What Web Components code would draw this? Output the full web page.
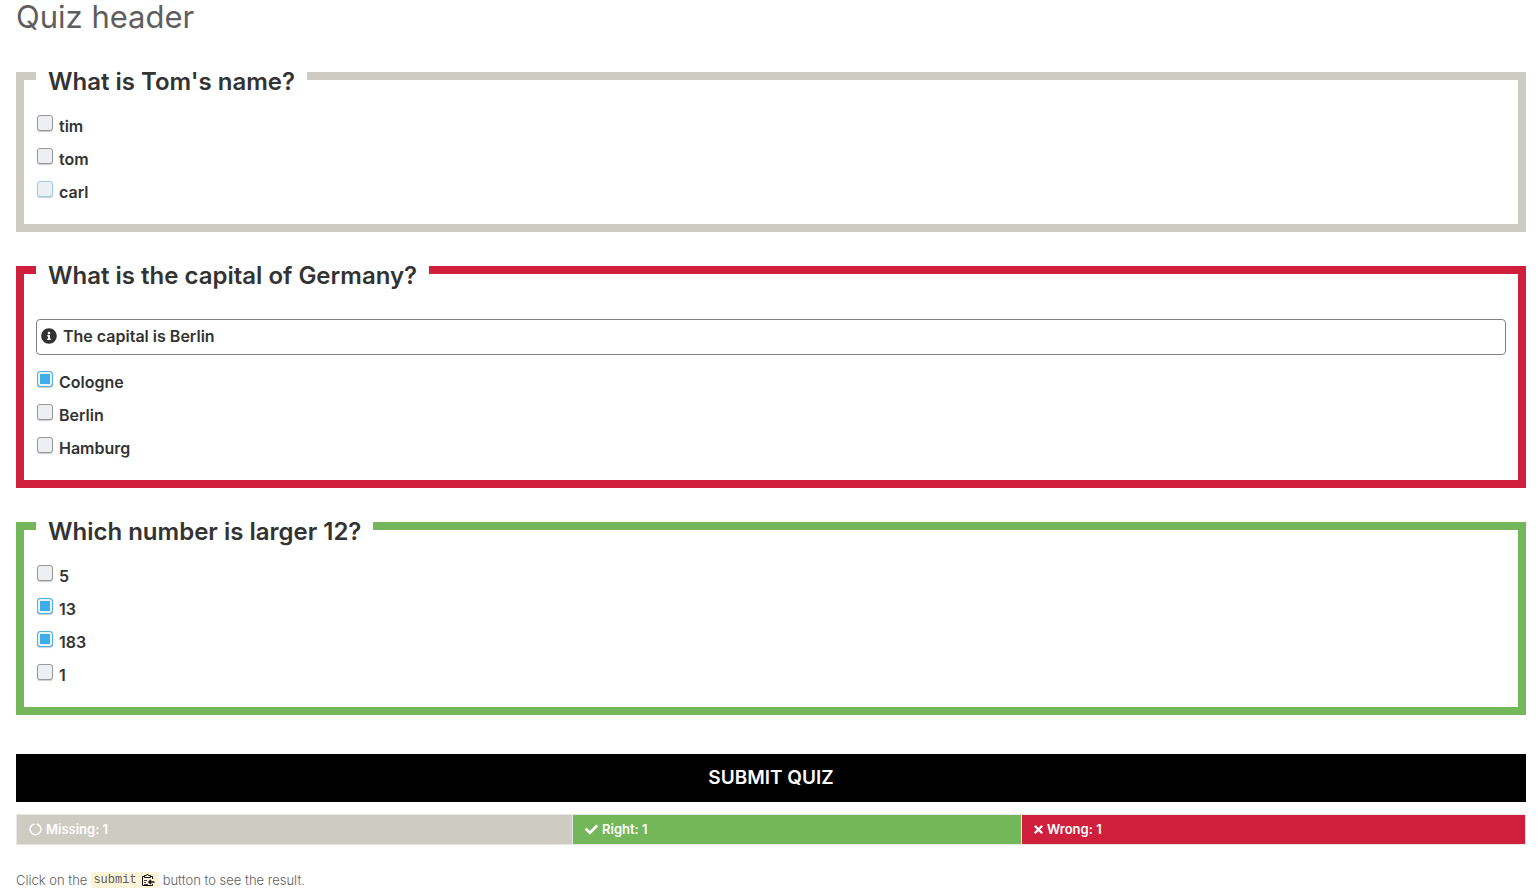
<!DOCTYPE html>
<html lang="en">
<head>
<meta charset="utf-8">
<title>Quiz</title>
<style>
body { margin: 0; background: #fff; color: #333; font-family: Inter, "Liberation Sans", sans-serif; }
</style>
</head>
<body>
<quiz-page>
  <span slot="title">Quiz header</span>
  <quiz-question>
    <span slot="question">What is Tom's name?</span>
    <quiz-option>tim</quiz-option>
    <quiz-option>tom</quiz-option>
    <quiz-option active>carl</quiz-option>
  </quiz-question>
  <quiz-question state="wrong">
    <span slot="question">What is the capital of Germany?</span>
    <quiz-hint slot="hint">The capital is Berlin</quiz-hint>
    <quiz-option checked>Cologne</quiz-option>
    <quiz-option>Berlin</quiz-option>
    <quiz-option>Hamburg</quiz-option>
  </quiz-question>
  <quiz-question state="right">
    <span slot="question">Which number is larger 12?</span>
    <quiz-option>5</quiz-option>
    <quiz-option checked>13</quiz-option>
    <quiz-option checked>183</quiz-option>
    <quiz-option>1</quiz-option>
  </quiz-question>
  <quiz-submit slot="footer">Submit Quiz</quiz-submit>
  <quiz-score slot="footer" missing="1" right="1" wrong="1"></quiz-score>
  <quiz-help slot="footer"></quiz-help>
</quiz-page>

<script>
const define = (name, html, setup) => {
  const template = document.createElement('template');
  template.innerHTML = html;
  customElements.define(name, class extends HTMLElement {
    constructor() {
      super();
      this.attachShadow({ mode: 'open' }).append(template.content.cloneNode(true));
    }
    connectedCallback() { if (setup) setup(this, this.shadowRoot); }
  });
};

define('quiz-page', `
<style>
  :host { display: block; padding: 0 14px 16px 16px; }
  h1 { margin: 0 0 22px; font-size: 31px; line-height: 34px; font-weight: 400; color: #5e5e5e; }
  main { display: flex; flex-direction: column; gap: 18px; }
</style>
<h1><slot name="title"></slot></h1>
<main><slot></slot></main>
<slot name="footer"></slot>`);

define('quiz-question', `
<style>
  :host { display: block; --edge: #cecbc2; }
  :host([state="wrong"]) { --edge: #d01f3c; }
  :host([state="right"]) { --edge: #74b65a; }
  fieldset { margin: 0; min-width: 0; border: 8px solid var(--edge); padding: 0 12px 16px; }
  legend { padding: 12px 12px 0; font-size: 24px; line-height: 28px; font-weight: 600; }
  .options { padding-top: 13px; }
  ::slotted([slot="hint"]) { margin: 29px 0 -3px; }
</style>
<fieldset>
  <legend><slot name="question"></slot></legend>
  <slot name="hint"></slot>
  <div class="options"><slot></slot></div>
</fieldset>`);

define('quiz-option', `
<style>
  :host { display: block; }
  label { display: flex; gap: 6px; padding-left: 1px; width: fit-content; font-size: 16px; line-height: 33px; font-weight: 600; }
  span { padding-top: 1px; height: 32px; }
  input { appearance: none; box-sizing: border-box; width: 16px; height: 16px; margin: 6px 0 0; border: 1px solid #959799; border-radius: 3px; background: #eeeff2; box-shadow: 0 1px 1px #0003; }
  :host([active]) input { border-color: #96cfee; }
  input:checked { border-color: #4db2ea; background: #3daee9; box-shadow: inset 0 0 0 2px #eaf3f9, 0 1px 1px #0003; }
</style>
<label><input type="checkbox"><span><slot></slot></span></label>`,
  (host, root) => { root.querySelector('input').checked = host.hasAttribute('checked'); });

define('quiz-hint', `
<style>
  :host { display: flex; align-items: center; gap: 6px; box-sizing: border-box; height: 36px; padding: 0 4px 2px; border: 1px solid #808080; border-radius: 4px; font-size: 16px; font-weight: 600; }
  svg { width: 16px; height: 16px; fill: currentColor; }
</style>
<svg viewBox="0 0 512 512" aria-hidden="true"><path d="M256 8C119.043 8 8 119.083 8 256c0 136.997 111.043 248 248 248s248-111.003 248-248C504 119.083 392.957 8 256 8zm0 110c23.196 0 42 18.804 42 42s-18.804 42-42 42-42-18.804-42-42 18.804-42 42-42zm56 254c0 6.627-5.373 12-12 12h-88c-6.627 0-12-5.373-12-12v-24c0-6.627 5.373-12 12-12h12v-64h-12c-6.627 0-12-5.373-12-12v-24c0-6.627 5.373-12 12-12h64c6.627 0 12 5.373 12 12v100h12c6.627 0 12 5.373 12 12v24z"/></svg>
<span><slot></slot></span>`);

define('quiz-submit', `
<style>
  :host { display: block; margin-top: 39px; }
  button { display: block; width: 100%; height: 48px; border: 0; padding: 0 0 2px; background: #000; color: #fff; font: 600 19px Inter, sans-serif; text-transform: uppercase; cursor: pointer; }
</style>
<button type="button"><slot></slot></button>`);

define('quiz-score', `
<style>
  :host { display: block; margin-top: 12px; }
  ul { display: grid; grid-template-columns: 555fr 448fr 503fr; gap: 1px; margin: 0; padding: 1px; list-style: none; background: #e6e6e6; color: #fff; font-size: 13px; line-height: 29px; font-weight: 600; }
  li { display: flex; align-items: center; gap: 4px; padding-left: 12px; }
  b { font-weight: inherit; }
  .missing { background: #cecbc2; }
  .right { background: #74b65a; }
  .wrong { background: #d01f3c; }
  svg { height: 13px; fill: currentColor; }
</style>
<ul>
  <li class="missing"><svg width="13" viewBox="0 0 13 13" aria-hidden="true"><path d="M4.6 1.3A5.4 5.4 0 1 0 8.4 1.3" fill="none" stroke="currentColor" stroke-width="1.6" stroke-linecap="round"/></svg><span>Missing: <b></b></span></li>
  <li class="right"><svg width="13" viewBox="0 0 512 512" aria-hidden="true"><path d="M173.898 439.404l-166.4-166.4c-9.997-9.997-9.997-26.206 0-36.204l36.203-36.204c9.997-9.998 26.207-9.998 36.204 0L192 312.69 432.095 72.596c9.997-9.997 26.207-9.997 36.204 0l36.203 36.204c9.997 9.997 9.997 26.206 0 36.204l-294.4 294.401c-9.998 9.997-26.207 9.997-36.204-.001z"/></svg><span>Right: <b></b></span></li>
  <li class="wrong"><svg width="9" viewBox="0 0 9 13" aria-hidden="true"><path d="M1.5 3.5l6 6m0-6l-6 6" stroke="currentColor" stroke-width="2.4" stroke-linecap="round"/></svg><span>Wrong: <b></b></span></li>
</ul>`,
  (host, root) => {
    for (const kind of ['missing', 'right', 'wrong'])
      root.querySelector('.' + kind + ' b').textContent = host.getAttribute(kind);
  });

define('quiz-help', `
<style>
  :host { display: block; margin-top: 25px; font-size: 13px; line-height: 20px; font-weight: 300; color: #5e5e5e; }
  p { display: flex; align-items: center; gap: 4px; margin: 0; }
  code { display: flex; align-items: center; gap: 4px; height: 16px; padding: 0 4px 0 2px; border-radius: 2px; background: #fdf3d8; font: 12px/16px "Liberation Mono", monospace; color: #5e5e5e; }
  svg { width: 14px; height: 14px; }
</style>
<p><span>Click on the</span><code>submit<svg viewBox="0 0 14 14" fill="none" stroke="#111" aria-hidden="true"><path d="M11.5 6V3.5h-2M3.5 3.5h-2v9h10V11M3.5 4.5v-2h2L6.5 1l1 1.5h2v2z"/><path d="M3 7.5h3M3 9.5h2M3 11.5h4" stroke-width="0.8"/><path d="M13.5 9H8M10 7L8 9l2 2" stroke-width="1.6"/></svg></code><span>button to see the result.</span></p>`);
</script>
</body>
</html>
